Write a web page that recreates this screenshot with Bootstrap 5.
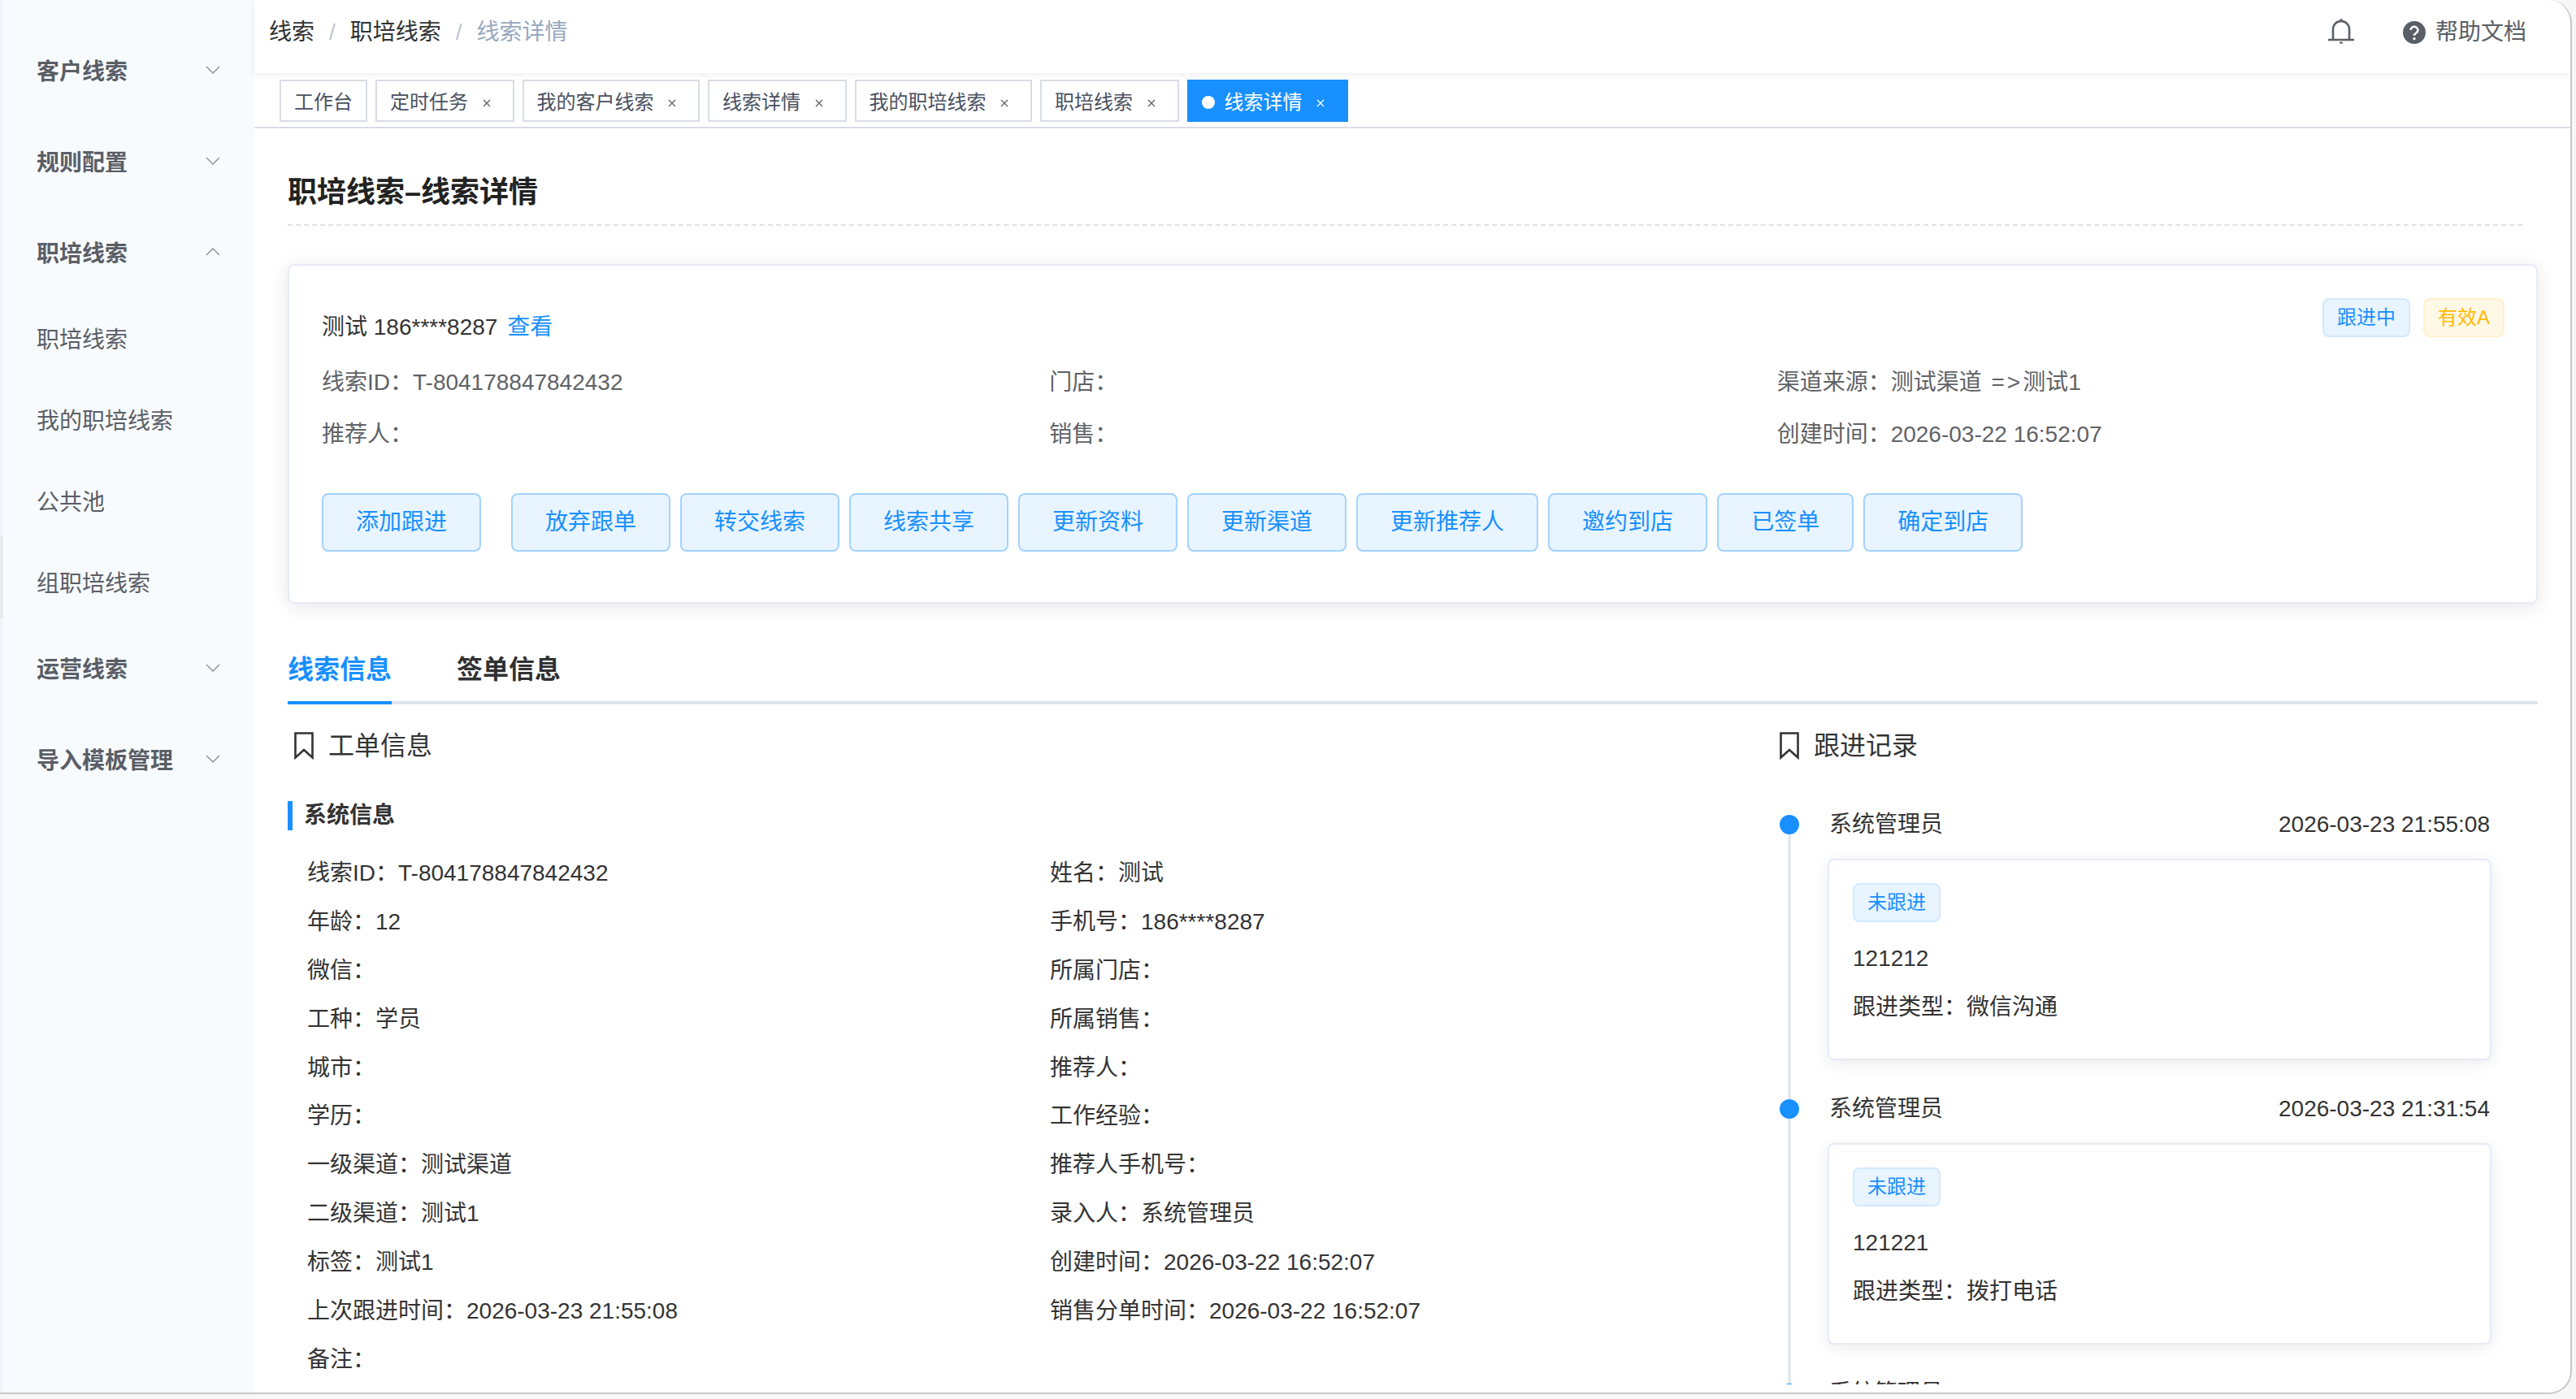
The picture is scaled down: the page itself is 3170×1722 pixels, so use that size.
<!DOCTYPE html>
<html lang="zh-CN">
<head>
<meta charset="utf-8">
<title>线索详情</title>
<link rel="stylesheet" href="https://cdn.jsdelivr.net/npm/bootstrap@5.3.0/dist/css/bootstrap.min.css">
<style>
html,body{height:1722px;overflow:hidden}
body{background:#f7f7f7;font-family:"Liberation Sans","Noto Sans CJK SC",sans-serif;font-size:28px;color:#333;line-height:1.4}
.app-shell{width:3165px;height:1716px;background:#fff;border-right:2px solid #c8c8c8;border-bottom:2px solid #c8c8c8;border-radius:0 28px 28px 0;overflow:hidden}
.edge-rail{width:4px;background:#f1f5f9;padding-top:660px;flex:none}
.edge-thumb{height:100px;background:#e8ebef}
.side-menu{width:309px;background:#f8fbfd;padding-top:33px;flex:none}
.menu-top,.menu-sub{color:#5a5e66;padding:0 42px 0 41px;font-size:28px}
.menu-top{height:112px;font-weight:700}
.menu-top svg{margin-top:-6px}
.menu-sub{height:100px}
.menu-top:hover,.menu-sub:hover{color:#5a5e66}
.main-pane{min-width:0}
.top-head{height:90px;padding:0 54px 11px 18px;box-shadow:0 2px 8px rgba(0,0,0,.07);position:relative;flex:none}
.crumbs{--bs-breadcrumb-margin-bottom:0;--bs-breadcrumb-item-padding-x:18px;--bs-breadcrumb-divider-color:#c0c4cc;--bs-breadcrumb-font-size:28px;line-height:40px}
.crumbs .breadcrumb-item{color:#303133}
.crumbs .breadcrumb-item.active{color:#97a8be}
.head-tools{gap:60px;color:#5a5e66}
.bell-ico{margin-top:-3px}
.tag-strip{height:68px;padding:8px 0 0 31px;gap:10px;border-bottom:2px solid #d8dce5;flex:none}
.view-tag{height:52px;border:2px solid #d8dce5;padding:3px 16px 0;font-size:24px;color:#495060;background:#fff;line-height:1}
.view-tag svg{margin:2px 11px 0 17.500px;display:block}
.view-tag.on{background:#1890ff;border-color:#1890ff;color:#fff}
.tag-dot{width:16px;height:16px;border-radius:50%;background:#fff;margin-right:12px}
.page-body{height:1546px;overflow:hidden;padding:0 40px 0 41px;flex:none}
.page-title{font-size:36px;font-weight:700;line-height:50px;color:#222;padding:54px 0 14px;border-bottom:2px dashed #e0e0e0;margin:0;width:2750px}
.lead-panel{margin-top:47px;height:418px;border:2px solid #e6ebf5;border-radius:8px;box-shadow:0 4px 24px rgba(0,0,0,.1);padding:40px 39px 0 40px;color:#606266;--bs-card-bg:#fff}
.who-row{height:56px}
.who-name{margin-top:16px;line-height:40px;color:#333}
.who-name a{color:#1890ff;text-decoration:none;margin-left:4px}
.status-chip{height:48px;font-size:24px;font-weight:400;padding:0 16px;line-height:44px;border-radius:8px;border:2px solid}
.chip-blue{background:#e8f4ff;border-color:#d1e9ff;color:#1890ff}
.chip-amber{background:#fff8e6;border-color:#fff1cc;color:#ffba00}
.chips{gap:16px}
.fact-rows{margin-top:16px}
.fact-rows>div{line-height:64px}
.arrow-txt{letter-spacing:3px;margin-left:4px}
.act-row{margin-top:40px;gap:12px}
.act-btn{height:72px;padding:0 40px;font-size:28px;line-height:68px;background:#e8f4ff;border:2px solid #a3d3ff;color:#1890ff;border-radius:8px;white-space:nowrap}
.act-btn:first-child{margin-right:25px}
.info-tabs{margin-top:61px;gap:80px;border-bottom:4px solid #dfe4ed;height:63px}
.info-tab{font-size:32px;font-weight:700;line-height:40px;color:#303133;height:63px;padding:0}
.info-tab.on{color:#1890ff;border-bottom:4px solid #1890ff}
.info-tab:hover{color:#303133}
.info-tab.on:hover{color:#1890ff}
.col-main{width:1828px;flex:none}
.col-side{flex:none;width:884px;padding-left:7px}
.sec-head{margin-top:33px;height:36px;font-size:32px;line-height:36px;color:#333}
.col-main .sec-head{padding-left:8px}
.col-side .sec-head{padding-left:1px}
.sec-head svg{margin-right:18px;flex:none}
.sub-bar{margin-top:50px;height:36px;line-height:36px;border-left:6px solid #1890ff;padding-left:14px;font-weight:700;color:#333}
.fields{margin-top:23px;padding-left:24px;display:grid;grid-template-columns:914px 1fr;grid-auto-rows:59.9px;line-height:59.9px;color:#333}
.trail{margin-top:67px}
.trail-item{height:350px}
.trail-axis{width:26px;margin-right:34px;flex:none}
.trail-dot{width:24px;height:24px;border-radius:50%;background:#1890ff;flex:none}
.trail-line{width:4px;flex-grow:1;background:#e4e7ed}
.trail-body{width:817px;flex:none}
.trail-who{height:24px;padding:0 2px 0 2px;margin-bottom:30px}
.note-card{height:248px;border:2px solid #e6ebf5;border-radius:8px;box-shadow:0 4px 20px rgba(0,0,0,.08);padding:28px 29px;--bs-card-bg:#fff;color:#333}
.note-tag{align-self:flex-start;margin-bottom:15px}
.note-card div{line-height:60px}
</style>
</head>
<body>
<div class="app-shell d-flex">
  <div class="edge-rail"><div class="edge-thumb"></div></div>
  <nav class="side-menu nav flex-column flex-nowrap">
    <a class="menu-top nav-link d-flex justify-content-between align-items-center" href="#">客户线索<svg width="18" height="10" viewBox="0 0 18 10" fill="none" stroke="#909399" stroke-width="1.5"><path d="M1 1l8 8 8-8"/></svg></a>
    <a class="menu-top nav-link d-flex justify-content-between align-items-center" href="#">规则配置<svg width="18" height="10" viewBox="0 0 18 10" fill="none" stroke="#909399" stroke-width="1.5"><path d="M1 1l8 8 8-8"/></svg></a>
    <a class="menu-top nav-link d-flex justify-content-between align-items-center" href="#">职培线索<svg width="18" height="10" viewBox="0 0 18 10" fill="none" stroke="#909399" stroke-width="1.5"><path d="M1 9l8-8 8 8"/></svg></a>
    <a class="menu-sub nav-link d-flex align-items-center" href="#">职培线索</a>
    <a class="menu-sub nav-link d-flex align-items-center" href="#">我的职培线索</a>
    <a class="menu-sub nav-link d-flex align-items-center" href="#">公共池</a>
    <a class="menu-sub nav-link d-flex align-items-center" href="#">组职培线索</a>
    <a class="menu-top nav-link d-flex justify-content-between align-items-center" href="#">运营线索<svg width="18" height="10" viewBox="0 0 18 10" fill="none" stroke="#909399" stroke-width="1.5"><path d="M1 1l8 8 8-8"/></svg></a>
    <a class="menu-top nav-link d-flex justify-content-between align-items-center" href="#">导入模板管理<svg width="18" height="10" viewBox="0 0 18 10" fill="none" stroke="#909399" stroke-width="1.5"><path d="M1 1l8 8 8-8"/></svg></a>
  </nav>
  <div class="main-pane flex-grow-1 d-flex flex-column">
    <header class="top-head d-flex align-items-center justify-content-between">
      <ol class="breadcrumb crumbs">
        <li class="breadcrumb-item">线索</li>
        <li class="breadcrumb-item">职培线索</li>
        <li class="breadcrumb-item active">线索详情</li>
      </ol>
      <div class="head-tools d-flex align-items-center">
        <svg class="bell-ico" width="32" height="32" viewBox="0 0 32 32" fill="none" stroke="#5a5e66" stroke-width="2.6"><path d="M6 27V14a10 10 0 0 1 20 0v13"/><path d="M1 27h30" stroke-linecap="round"/><circle cx="16" cy="2.6" r="1.6" fill="#5a5e66" stroke="none"/><path d="M14 30.6h4" stroke-width="2"/></svg>
        <div class="d-flex align-items-center gap-2">
          <svg class="me-1" width="28" height="28" viewBox="0 0 28 28"><circle cx="14" cy="14" r="14" fill="#5a5e66"/><path d="M9.6 11a4.4 4.2 0 1 1 6.8 3.5c-1.600 1-2.400 1.600-2.400 3.200" fill="none" stroke="#fff" stroke-width="2.6"/><circle cx="14" cy="21.6" r="1.7" fill="#fff"/></svg>
          <span>帮助文档</span>
        </div>
      </div>
    </header>
    <div class="tag-strip d-flex align-items-start">
      <span class="view-tag d-flex align-items-center">工作台</span>
      <span class="view-tag d-flex align-items-center">定时任务<svg width="10" height="10" viewBox="0 0 10 10" stroke="#606266" stroke-width="1.3"><path d="M1 1l8 8M9 1l-8 8"/></svg></span>
      <span class="view-tag d-flex align-items-center">我的客户线索<svg width="10" height="10" viewBox="0 0 10 10" stroke="#606266" stroke-width="1.3"><path d="M1 1l8 8M9 1l-8 8"/></svg></span>
      <span class="view-tag d-flex align-items-center">线索详情<svg width="10" height="10" viewBox="0 0 10 10" stroke="#606266" stroke-width="1.3"><path d="M1 1l8 8M9 1l-8 8"/></svg></span>
      <span class="view-tag d-flex align-items-center">我的职培线索<svg width="10" height="10" viewBox="0 0 10 10" stroke="#606266" stroke-width="1.3"><path d="M1 1l8 8M9 1l-8 8"/></svg></span>
      <span class="view-tag d-flex align-items-center">职培线索<svg width="10" height="10" viewBox="0 0 10 10" stroke="#606266" stroke-width="1.3"><path d="M1 1l8 8M9 1l-8 8"/></svg></span>
      <span class="view-tag on d-flex align-items-center"><i class="tag-dot"></i>线索详情<svg width="10" height="10" viewBox="0 0 10 10" stroke="#fff" stroke-width="1.3"><path d="M1 1l8 8M9 1l-8 8"/></svg></span>
    </div>
    <main class="page-body">
      <h1 class="page-title">职培线索–线索详情</h1>
      <section class="card lead-panel">
        <div class="who-row d-flex justify-content-between align-items-start">
          <div class="who-name">测试 186****8287 <a href="#">查看</a></div>
          <div class="chips d-flex">
            <span class="badge status-chip chip-blue">跟进中</span>
            <span class="badge status-chip chip-amber">有效A</span>
          </div>
        </div>
        <div class="fact-rows row g-0">
          <div class="col-4">线索ID：T-804178847842432</div>
          <div class="col-4">门店：</div>
          <div class="col-4">渠道来源：测试渠道 <span class="arrow-txt">=&gt;</span>测试1</div>
          <div class="col-4">推荐人：</div>
          <div class="col-4">销售：</div>
          <div class="col-4">创建时间：2026-03-22 16:52:07</div>
        </div>
        <div class="act-row d-flex">
          <button class="btn act-btn" type="button">添加跟进</button>
          <button class="btn act-btn" type="button">放弃跟单</button>
          <button class="btn act-btn" type="button">转交线索</button>
          <button class="btn act-btn" type="button">线索共享</button>
          <button class="btn act-btn" type="button">更新资料</button>
          <button class="btn act-btn" type="button">更新渠道</button>
          <button class="btn act-btn" type="button">更新推荐人</button>
          <button class="btn act-btn" type="button">邀约到店</button>
          <button class="btn act-btn" type="button">已签单</button>
          <button class="btn act-btn" type="button">确定到店</button>
        </div>
      </section>
      <nav class="info-tabs nav">
        <a class="info-tab on nav-link" href="#">线索信息</a>
        <a class="info-tab nav-link" href="#">签单信息</a>
      </nav>
      <div class="d-flex">
        <div class="col-main">
          <div class="sec-head d-flex align-items-center">
            <svg width="24" height="34" viewBox="0 0 24 34" fill="none" stroke="#333" stroke-width="2.6"><path d="M1.5 1.5h21v30L12 22 1.500 31.500z"/></svg>工单信息
          </div>
          <div class="sub-bar">系统信息</div>
          <div class="fields">
            <div>线索ID：T-804178847842432</div><div>姓名：测试</div>
            <div>年龄：12</div><div>手机号：186****8287</div>
            <div>微信：</div><div>所属门店：</div>
            <div>工种：学员</div><div>所属销售：</div>
            <div>城市：</div><div>推荐人：</div>
            <div>学历：</div><div>工作经验：</div>
            <div>一级渠道：测试渠道</div><div>推荐人手机号：</div>
            <div>二级渠道：测试1</div><div>录入人：系统管理员</div>
            <div>标签：测试1</div><div>创建时间：2026-03-22 16:52:07</div>
            <div>上次跟进时间：2026-03-23 21:55:08</div><div>销售分单时间：2026-03-22 16:52:07</div>
            <div>备注：</div>
          </div>
        </div>
        <div class="col-side">
          <div class="sec-head d-flex align-items-center">
            <svg width="24" height="34" viewBox="0 0 24 34" fill="none" stroke="#333" stroke-width="2.6"><path d="M1.5 1.5h21v30L12 22 1.500 31.500z"/></svg>跟进记录
          </div>
          <div class="trail">
            <div class="trail-item d-flex">
              <div class="trail-axis d-flex flex-column align-items-center"><i class="trail-dot"></i><i class="trail-line"></i></div>
              <div class="trail-body">
                <div class="trail-who d-flex justify-content-between align-items-center"><span>系统管理员</span><span>2026-03-23 21:55:08</span></div>
                <div class="card note-card">
                  <span class="badge status-chip chip-blue note-tag">未跟进</span>
                  <div>121212</div>
                  <div>跟进类型：微信沟通</div>
                </div>
              </div>
            </div>
            <div class="trail-item d-flex">
              <div class="trail-axis d-flex flex-column align-items-center"><i class="trail-dot"></i><i class="trail-line"></i></div>
              <div class="trail-body">
                <div class="trail-who d-flex justify-content-between align-items-center"><span>系统管理员</span><span>2026-03-23 21:31:54</span></div>
                <div class="card note-card">
                  <span class="badge status-chip chip-blue note-tag">未跟进</span>
                  <div>121221</div>
                  <div>跟进类型：拨打电话</div>
                </div>
              </div>
            </div>
            <div class="trail-item d-flex">
              <div class="trail-axis d-flex flex-column align-items-center"><i class="trail-dot"></i><i class="trail-line"></i></div>
              <div class="trail-body">
                <div class="trail-who d-flex justify-content-between align-items-center"><span>系统管理员</span></div>
              </div>
            </div>
          </div>
        </div>
      </div>
    </main>
  </div>
</div>
<script src="https://cdn.jsdelivr.net/npm/bootstrap@5.3.0/dist/js/bootstrap.bundle.min.js"></script>
</body>
</html>
